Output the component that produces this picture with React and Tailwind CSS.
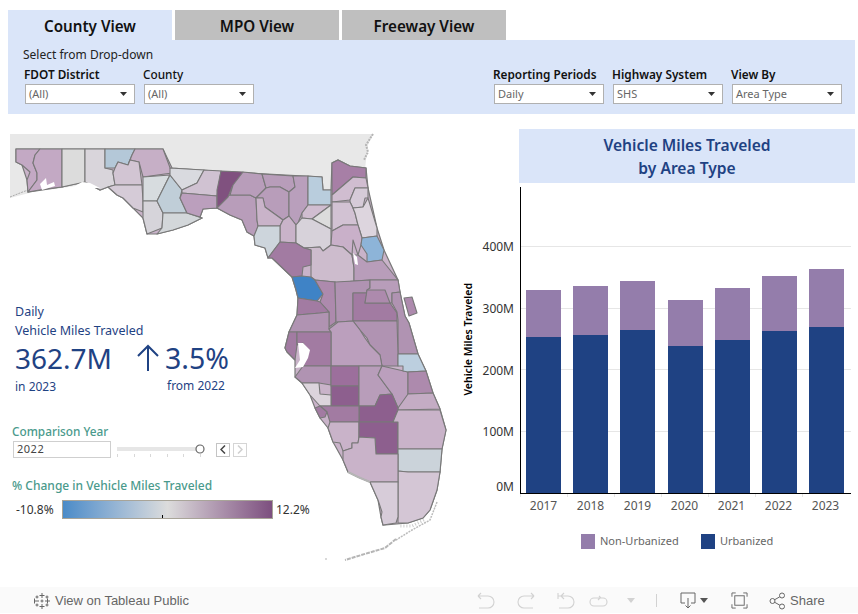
import React from "react";

const counties = [
  ["16,149 40,149 35,155 33,163 37,173 37,180 28,192 27,180 30,172 22,165 16,162", "#c3a9c4"],
  ["40,149 62,149 62,187 45,189 28,192 37,180 37,173 33,163 35,155", "#c3a9c4"],
  ["62,149 85,149 85,182 62,187", "#dcdcdc"],
  ["85,149 105,149 105,168 113,170 113,173 115,185 108,187 100,190 85,182", "#d9d5db"],
  ["105,149 135,149 132,155 128,165 118,162 115,168 105,168", "#b4c8d8"],
  ["135,149 163,149 172,173 143,177 139,162 130,160 128,165 132,155", "#c6afc6"],
  ["115,168 118,162 128,165 130,160 139,162 142,185 115,185 113,173", "#d2c5d3"],
  ["108,187 115,185 142,185 143,201 143,212 133,208 123,198 117,195", "#d5cbd7"],
  ["143,177 170,175 157,201 143,201", "#d7dcdf"],
  ["143,201 157,201 163,213 162,228 147,234 143,218", "#d6d4da"],
  ["170,175 182,190 180,198 187,213 163,213 157,201", "#c0ced8"],
  ["163,213 187,213 202,218 188,225 173,230 157,234 162,228", "#d3d7da"],
  ["170,168 204,170 197,183 182,190 170,175", "#d9dadf"],
  ["204,170 221,171 217,196 182,193 182,190 197,183", "#d0c2d2"],
  ["182,193 217,196 217,208 203,209 200,217 187,213 180,198", "#bb9fbd"],
  ["222,198 230,195 250,195 256,198 257,220 258,227 254,236 247,232 242,220 230,215 217,208", "#b89dba"],
  ["221,171 243,172 238,180 232,187 228,197 217,208 217,190", "#80517f"],
  ["243,172 262,174 266,188 256,198 250,195 230,195 233,185", "#b89dba"],
  ["262,174 293,176 295,187 289,192 280,187 270,187 266,188", "#b89dba"],
  ["266,188 270,187 280,187 289,192 289,216 283,220 265,207 263,198 256,198", "#b89dba"],
  ["256,198 263,198 265,207 283,220 280,226 258,226 257,220", "#c9b3c9"],
  ["293,176 308,176 308,205 302,213 298,223 296,225 289,216 289,192 295,187", "#b99fbc"],
  ["308,176 322,177 323,190 331,190 331,205 308,205", "#b9cddd"],
  ["332,163 338,160 350,166 366,168 366,178 353,177 332,195", "#a77fa6"],
  ["332,195 353,177 366,178 368,188 355,188 350,200 332,202", "#d0bdd0"],
  ["355,188 368,188 368,198 365,198 363,207 353,208 350,202 350,200", "#d6cbd8"],
  ["302,218 302,213 308,205 331,205 312,219", "#d0bdd0"],
  ["331,205 331,229 312,219", "#dcdcdc"],
  ["280,226 283,220 289,216 296,225 296,243 280,242", "#c9b3c9"],
  ["258,226 280,226 280,242 268,258 265,248 255,245 254,236", "#cdd5dc"],
  ["296,225 302,218 312,219 331,229 331,245 323,251 320,247 304,248 296,243", "#d7d2da"],
  ["332,202 350,202 353,208 355,213 358,225 343,225 332,231", "#d2c2d3"],
  ["353,208 363,207 368,198 377,228 377,236 362,238 358,225 355,213", "#ddd5de"],
  ["332,231 343,225 358,225 362,238 361,245 358,255 353,240 352,255 343,247 331,245", "#c9b0c9"],
  ["362,238 377,236 384,250 382,260 367,262 367,254 361,245", "#8db4d8"],
  ["304,248 320,247 323,251 331,245 343,247 352,255 354,268 354,281 337,283 335,282 315,280 311,277 311,265 311,250", "#cdbccd"],
  ["352,255 358,255 367,262 382,260 398,280 370,280 354,281 354,268", "#b89dba"],
  ["280,242 296,243 304,248 311,250 311,265 303,267 302,276 292,277 272,258 268,258", "#a27ba2"],
  ["292,277 302,276 311,277 315,280 323,294 317,301 298,298 296,290", "#3f83c6"],
  ["315,280 335,282 336,322 329,327 329,312 320,302 323,294", "#ad8aad"],
  ["298,298 317,301 320,302 329,312 320,313 297,315", "#a27ba2"],
  ["297,315 320,313 329,312 329,329 331,332 289,332", "#b093b2"],
  ["335,282 354,281 370,280 370,293 353,293 353,321 338,322 336,322", "#b093b2"],
  ["370,280 398,280 400,292 392,293 392,303 365,303 367,290 370,288", "#b89dba"],
  ["353,293 367,293 365,303 390,303 397,313 397,321 353,321", "#a27ba2"],
  ["367,290 385,290 390,303 365,303", "#ad8aad"],
  ["392,293 400,292 405,316 409,323 418,354 398,354 398,320 397,312 392,303", "#b093b2"],
  ["404,298 412,297 417,313 409,316", "#ad8aad"],
  ["353,321 397,321 398,354 398,366 382,366 380,355 370,345 367,338 360,330", "#b093b2"],
  ["329,329 338,322 353,321 360,330 365,338 370,345 380,355 382,366 331,366 331,332", "#bb9fbd"],
  ["289,332 297,332 297,345 295,360 287,352 285,348", "#a27ba2"],
  ["297,332 331,332 331,366 303,366 308,352 303,343 297,345", "#a27ba2"],
  ["295,377 303,366 331,366 331,385 319,383 302,383", "#b093b2"],
  ["331,366 359,366 359,386 331,386", "#9c6f9c"],
  ["331,386 359,386 359,406 331,406", "#8d5f8e"],
  ["302,383 319,383 320,394 331,395 331,406 320,406 310,395", "#dcd4dc"],
  ["359,366 382,366 378,375 392,394 380,395 375,406 359,406", "#b89dba"],
  ["382,366 408,372 408,397 398,408 392,394 378,375", "#bb9fbd"],
  ["398,354 418,354 426,371 408,372 403,371 403,366 398,366", "#bccfdf"],
  ["408,372 426,371 433,393 408,394", "#ad8aad"],
  ["408,394 433,393 440,409 398,410 398,408", "#c4acc4"],
  ["359,406 375,406 380,395 392,394 398,408 398,410 393,422 359,422", "#8d5f8e"],
  ["320,406 359,406 359,422 330,422 327,412", "#a27ba2"],
  ["315,408 320,406 327,412 325,417 320,418", "#a27ba2"],
  ["330,422 359,422 359,437 358,443 352,443 352,448 343,451 340,443 333,442 328,428", "#c9b3c9"],
  ["359,422 393,422 398,422 398,454 376,454 375,438 359,437", "#8d5f8e"],
  ["398,410 440,410 446,430 442,449 398,449 398,422 393,422", "#c9b3c9"],
  ["398,449 442,449 440,472 408,472 398,471", "#cbd3da"],
  ["398,471 408,472 440,472 437,490 430,510 423,518 408,523 398,523", "#d4c6d5"],
  ["343,451 352,448 352,443 358,443 359,437 375,438 376,454 398,454 398,482 370,482 358,477 348,472 343,460", "#c9b3c9"],
  ["370,482 398,482 398,517 396,523 383,525 381,517 382,512 378,500", "#d7ccd9"],
];

const florida =
  "16,149 163,149 172,168 230,172 322,177 323,190 331,190 332,163 338,160 350,166 366,168 368,188 377,228 384,250 398,280 400,292 405,316 409,323 418,354 426,371 433,393 440,409 446,430 442,449 440,472 437,490 430,510 423,518 408,523 383,525 381,517 378,500 370,482 358,477 348,472 343,460 333,442 328,428 320,418 315,408 310,395 302,383 295,377 295,360 287,352 285,348 289,332 297,315 298,298 296,290 292,277 272,258 268,258 265,248 255,245 254,236 247,232 242,220 230,215 217,208 203,209 200,217 202,218 188,225 173,230 157,234 147,234 143,218 133,208 123,198 117,195 108,187 100,190 85,182 62,187 28,192 27,180 22,165 16,162";

const bars = [
  { year: "2017", total: 203, urban: 156, gap: "ml-[5px]" },
  { year: "2018", total: 207, urban: 158, gap: "ml-[12px]" },
  { year: "2019", total: 212, urban: 163, gap: "ml-[12px]" },
  { year: "2020", total: 193, urban: 147, gap: "ml-[13px]" },
  { year: "2021", total: 205, urban: 153, gap: "ml-[12px]" },
  { year: "2022", total: 217, urban: 162, gap: "ml-[12px]" },
  { year: "2023", total: 224, urban: 166, gap: "ml-[12px]" },
];

function FloridaMap() {
  return (
    <svg className="absolute left-0 top-0" width="460" height="473" viewBox="0 114 460 473">
      <polygon points="10,134 373,134 368,145 366,160 365,170 331,170 331,200 230,175 172,172 62,188 33,192 10,198" fill="#e8e8e8" />
      <polyline points="373,134 366,145 368,152 364,160" fill="none" stroke="#b5b5b5" strokeWidth="2" strokeDasharray="2 1" />
      <polyline points="10,197 20,193 28,190" fill="none" stroke="#aaaaaa" strokeWidth="1" strokeDasharray="2 1" />
      <polygon points={florida} fill="#c9b3c9" stroke="#787878" strokeWidth="1.2" />
      {counties.map(([points, fill], i) => (
        <polygon key={i} points={points} fill={fill} stroke="#787878" strokeWidth="1.1" strokeLinejoin="round" />
      ))}
      {/* bays */}
      <polygon points="40,184 46,178 47,185 54,182 55,186 42,190" fill="#ffffff" />
      <polygon points="75,186 82,182 90,183 100,188 90,188 80,190" fill="#ffffff" />
      <polygon points="298,343 303,343 310,350 308,358 303,367 295,368 300,360" fill="#ffffff" />
      <polygon points="353,253 357,257 358,265 355,264" fill="#ffffff" />
      {/* keys and coast */}
      <polyline points="437,502 430,520 412,530 396,540" fill="none" stroke="#bbbbbb" strokeWidth="1.5" strokeDasharray="2 1" />
      <polyline points="396,539 385,548 368,553 345,560" fill="none" stroke="#b5b5b5" strokeWidth="2" strokeDasharray="4 1" />
      <polyline points="348,472 358,477 370,482" fill="none" stroke="#b5b5b5" strokeWidth="2" />
      <polyline points="424,520 412,526 400,526" fill="none" stroke="#cccccc" strokeWidth="3" strokeDasharray="1 2" />
      <circle cx="326" cy="559" r="1" fill="#cccccc" />
    </svg>
  );
}

function Dropdown({ label, value, bold = true, className = "" }) {
  return (
    <div className={"w-[110px] " + className}>
      <div className={"text-[11.800px] leading-[16px] text-[#111] whitespace-nowrap -ml-[1px] " + (bold ? "font-semibold" : "font-medium")}>
        {label}
      </div>
      <div className="mt-[2px] h-[20px] flex items-center justify-between border border-[#b0b0b0] bg-white pl-[3px] pr-[7px] text-[11px] text-[#666]">
        <span>{value}</span>
        <svg width="7" height="4" viewBox="0 0 7 4"><polygon points="0,0 7,0 3.5,4" fill="#333" /></svg>
      </div>
    </div>
  );
}

function Tab({ label, active }) {
  return (
    <div
      className={
        "w-[164px] h-[30px] pt-[2px] flex items-center justify-center text-[15.200px] font-semibold text-[#111] " +
        (active ? "bg-[#dae5f9]" : "bg-[#bfbfbf]")
      }
    >
      {label}
    </div>
  );
}

function Toolbar() {
  return (
    <div className="h-[26px] pt-[1px] bg-[#fafafa] flex items-center text-[#666] text-[13px] font-['Liberation_Sans',sans-serif]">
      <svg className="ml-[33px]" width="18" height="18" viewBox="0 0 18 18" stroke="#666" strokeWidth="1" fill="none">
        <path d="M9 1v5M6.5 3.5h5M9 12v5M6.5 14.5h5M1 9h5M1.5 6.5v5M12 9h5M14.500 6.500v5" />
        <path d="M4 3.500v3M2.500 5h3M14 3.500v3M12.500 5h3M4 11.500v3M2.500 13h3M14 11.500v3M12.500 13h3M9 7.500v3M7.500 9h3" />
      </svg>
      <span className="ml-[4px] w-[133px] whitespace-nowrap">View on Tableau Public</span>
      <svg className="ml-[289px]" width="136" height="20" viewBox="0 0 136 20" fill="none" stroke="#d2d2d2" strokeWidth="1.1">
        <path d="M1 5h10a6 6 0 0 1 0 12H2M1 5l3-3M1 5l3 3" />
        <path d="M57 5H47a6 6 0 0 0 0 12h9M57 5l-3-3M57 5l-3 3" />
        <path d="M81 2v6M81 5h10a6 6 0 0 1 0 12h-9M84 5l3-3M84 5l3 3" />
        <path d="M122 7h6a4 4 0 0 1 0 8h-9a4 4 0 0 1-4-4 4 4 0 0 1 4-4h7l-2-2M125 7l-2 2" transform="translate(-2 0)" />
      </svg>
      <svg className="ml-[13px]" width="10" height="6" viewBox="0 0 10 6"><polygon points="1,0 9,0 5,5" fill="#d2d2d2" /></svg>
      <span className="ml-[20px] h-[13px] w-[1px] bg-[#d2d2d2]" />
      <svg className="ml-[23px]" width="16" height="18" viewBox="0 0 16 18" fill="none" stroke="#666" strokeWidth="1">
        <path d="M5 11H1V1h14v10h-4M8 6v10M5.500 13.500L8 16l2.500-2.500" />
      </svg>
      <svg className="ml-[3px]" width="10" height="6" viewBox="0 0 10 6"><polygon points="1,0 9,0 5,5" fill="#555" /></svg>
      <svg className="ml-[22px]" width="17" height="17" viewBox="0 0 18 18" fill="none" stroke="#666" strokeWidth="1">
        <path d="M1 5V1h4M13 1h4v4M17 13v4h-4M5 17H1v-4" />
        <rect x="4" y="4" width="10" height="10" />
      </svg>
      <svg className="ml-[21px]" width="17" height="18" viewBox="0 0 17 18" fill="none" stroke="#666" strokeWidth="1">
        <circle cx="3.500" cy="9" r="2.500" />
        <circle cx="13" cy="3.500" r="2.500" />
        <circle cx="13" cy="14.500" r="2.500" />
        <path d="M5.700 7.700L10.800 4.800M5.700 10.300l5.100 2.900" />
      </svg>
      <span className="ml-[4px]">Share</span>
    </div>
  );
}

export default function App() {
  return (
    <div className="w-[858px] h-[614px] overflow-hidden bg-white font-['Noto_Sans',sans-serif] pt-[10px]">
      {/* Tabs */}
      <div className="flex gap-[3px] pl-[8px]">
        <Tab label="County View" active />
        <Tab label="MPO View" />
        <Tab label="Freeway View" />
      </div>

      {/* Filters */}
      <div className="ml-[8px] mr-[3px] h-[74px] bg-[#dae5f9] pl-[15px] pt-[7px]">
        <div className="text-[12px] leading-[16px] text-[#222]">Select from Drop-down</div>
        <div className="flex mt-[3px] pl-[2px]">
          <Dropdown label="FDOT District" value="(All)" />
          <Dropdown label="County" value="(All)" bold={false} className="ml-[9px]" />
          <Dropdown label="Reporting Periods" value="Daily" className="ml-[240px]" />
          <Dropdown label="Highway System" value="SHS" className="ml-[9px]" />
          <Dropdown label="View By" value="Area Type" className="ml-[9px]" />
        </div>
      </div>

      <div className="flex h-[473px]">
        {/* Left: map and KPIs */}
        <div className="relative w-[460px]">
          <FloridaMap />
          <div className="relative pt-[189px] text-[#1f4283]">
            <div className="pl-[15px] text-[12.500px] leading-[18px]">Daily</div>
            <div className="pl-[15px] mt-[1px] text-[12.500px] leading-[18px]">Vehicle Miles Traveled</div>
            <div className="flex items-center h-[40px] pl-[15px] -mt-[2px]">
              <span className="w-[121px] text-[28px] leading-[40px]">362.7M</span>
              <svg width="24" height="28" viewBox="0 0 24 28" fill="none" stroke="#1f4283" strokeWidth="2">
                <path d="M12 27V2M2 12L12 2l10 10" />
              </svg>
              <span className="ml-[5px] text-[28.500px] leading-[40px]">3.5%</span>
            </div>
            <div className="flex pl-[15px] text-[12px] leading-[18px]">
              <span className="w-[152px]">in 2023</span>
              <span className="-mt-[1px]">from 2022</span>
            </div>

            <div className="pl-[12px] mt-[26px] text-[11.800px] leading-[18px] font-medium text-[#4a9a8c]">Comparison Year</div>
            <div className="flex items-center ml-[13px] mt-[1px] h-[17px]">
              <div className="w-[98px] h-[17px] flex items-center border border-[#cfcfcf] bg-white pl-[3px] text-[11px] tracking-[0.5px] text-[#444]">2022</div>
              <svg className="ml-[6px]" width="90" height="18" viewBox="0 0 90 18">
                <rect x="0" y="6" width="83" height="4" fill="#e6e6e6" />
                <path d="M0.500 13v3M17.500 13v3M33.500 13v3M50.500 13v3M66.500 13v3M83.500 13v3" stroke="#d8d8d8" />
                <circle cx="83" cy="8" r="4" fill="#fff" stroke="#666" strokeWidth="1.200" />
              </svg>
              <div className="ml-[9px] w-[14px] h-[14px] flex items-center justify-center border border-[#c4c4c4] bg-white">
                <svg width="6" height="9" viewBox="0 0 6 9" fill="none" stroke="#444" strokeWidth="1.500"><path d="M5 0.500L1 4.500l4 4" /></svg>
              </div>
              <div className="ml-[3px] w-[14px] h-[14px] flex items-center justify-center border border-[#d5d5d5] bg-white">
                <svg width="6" height="9" viewBox="0 0 6 9" fill="none" stroke="#cfcfcf" strokeWidth="1.500"><path d="M1 0.500l4 4-4 4" /></svg>
              </div>
            </div>

            <div className="pl-[12px] mt-[19px] text-[12px] leading-[18px] font-medium text-[#4a9a8c]">% Change in Vehicle Miles Traveled</div>
            <div className="flex items-center mt-[5px] text-[12px] text-[#333]">
              <span className="w-[62px] pl-[16px] whitespace-nowrap">-10.8%</span>
              <div className="relative w-[211px] h-[19px] border border-[#a8a498] bg-gradient-to-r from-[#4a8bc8] via-[#dcdcdc] to-[#7d4f7f]">
                <span className="absolute left-[99px] bottom-0 w-[1px] h-[3px] bg-black" />
              </div>
              <span className="ml-[3px]">12.2%</span>
            </div>
          </div>
        </div>

        {/* Right: chart */}
        <div className="w-[398px]">
          <div className="ml-[59px] mr-[3px] mt-[15px] h-[54px] pt-[2px] bg-[#dae5f9] flex flex-col items-center justify-center text-[15.600px] leading-[23px] font-semibold text-[#1f4283]">
            <div>Vehicle Miles Traveled</div>
            <div>by Area Type</div>
          </div>

          <div className="flex mt-[4px] h-[307px]">
            <div className="w-[17px] flex items-center justify-end">
              <span className="[writing-mode:vertical-rl] rotate-180 text-[10.500px] font-semibold text-black whitespace-nowrap pt-[2px]">
                Vehicle Miles Traveled
              </span>
            </div>
            <div className="relative w-[43px] text-[12px] text-[#333]">
              <span className="absolute right-[6px] top-[51px]">400M</span>
              <span className="absolute right-[6px] top-[113px]">300M</span>
              <span className="absolute right-[6px] top-[175px]">200M</span>
              <span className="absolute right-[6px] top-[236px]">100M</span>
              <span className="absolute right-[6px] top-[291px]">0M</span>
            </div>
            <div className="relative w-[331px] border-l border-b border-black flex items-end">
              <span className="absolute inset-x-0 top-[59px] h-[1px] bg-[#e6e6e6]" />
              <span className="absolute inset-x-0 top-[121px] h-[1px] bg-[#e6e6e6]" />
              <span className="absolute inset-x-0 top-[182px] h-[1px] bg-[#e6e6e6]" />
              <span className="absolute inset-x-0 top-[244px] h-[1px] bg-[#e6e6e6]" />
              {bars.map((b) => (
                <div key={b.year} className={"relative w-[35px] bg-[#947dab] flex flex-col justify-end " + b.gap} style={{ height: b.total }}>
                  <div className="bg-[#1f4283]" style={{ height: b.urban }} />
                </div>
              ))}
            </div>
          </div>

          <div className="ml-[60px] w-[329px] flex">
            {bars.map((b) => (
              <div key={b.year} className="relative w-[47px] h-[24px] text-center text-[12px] leading-[24px] text-[#555]">
                <span className="absolute left-0 top-0 w-[1px] h-[3px] bg-[#e6e6e6]" />
                {b.year}
              </div>
            ))}
          </div>

          <div className="flex items-center ml-[121px] mt-[15px] h-[16px] text-[11px] text-[#666]">
            <span className="w-[14px] h-[15px] bg-[#947dab]" />
            <span className="ml-[5px] w-[101px]">Non-Urbanized</span>
            <span className="w-[14px] h-[15px] bg-[#1f4283]" />
            <span className="ml-[5px]">Urbanized</span>
          </div>
        </div>
      </div>

      <Toolbar />
    </div>
  );
}
